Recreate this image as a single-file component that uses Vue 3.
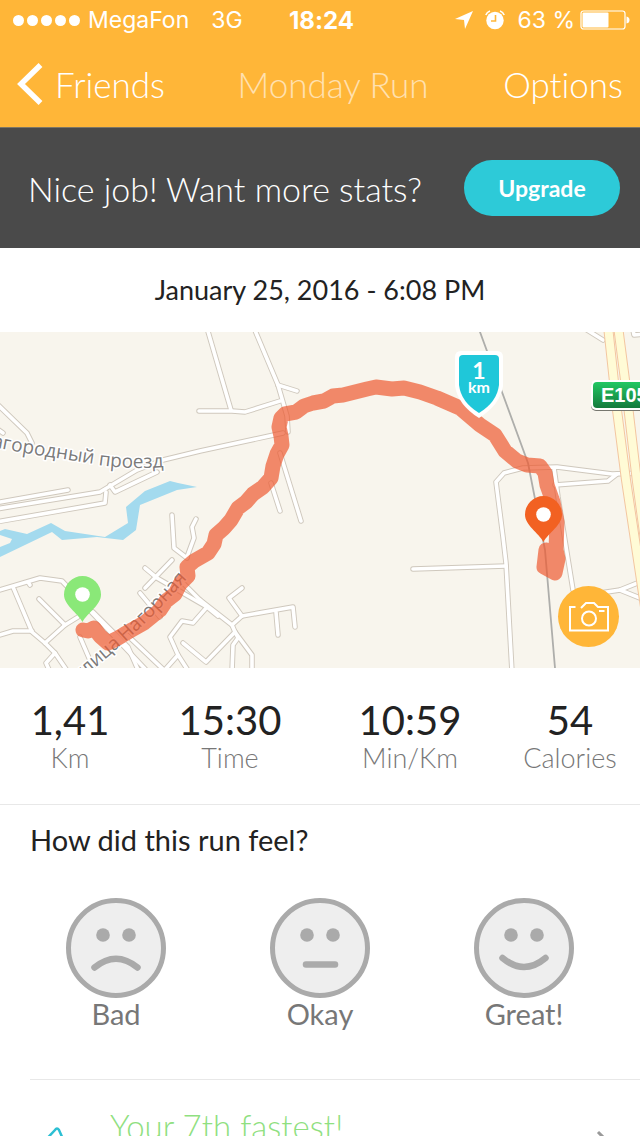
<template>
  <div class="screen">
    <header class="header">
      <div class="status-bar">
        <div class="status-left">
          <span class="signal">
            <i v-for="n in 5" :key="n" class="signal-dot"></i>
          </span>
          <span class="carrier">MegaFon</span>
          <span class="network">3G</span>
        </div>
        <strong class="clock">18:24</strong>
        <div class="status-right">
          <svg class="icon-location" viewBox="0 0 18 18" width="18" height="18">
            <path d="M0 8 L18 0 L10 18 L9 9 Z" fill="#fff" />
          </svg>
          <svg class="icon-alarm" viewBox="0 0 20 20" width="20" height="20">
            <circle cx="10" cy="10.5" r="8.7" fill="#fff" />
            <path d="M0.8 5 A7 7 0 0 1 5 1 M19.2 5 A7 7 0 0 0 15 1" fill="none" stroke="#fff" stroke-width="1.6" />
            <path d="M10.5 5 V11 H6" fill="none" stroke="#ffb638" stroke-width="1.6" />
          </svg>
          <span class="battery-level">63 %</span>
          <svg class="icon-battery" viewBox="0 0 50 20" width="50" height="20">
            <rect x="1" y="1" width="44" height="18" rx="2.5" fill="none" stroke="#fff" stroke-width="1.2" />
            <rect x="2.5" y="2.5" width="26" height="15" rx="1" fill="#fff" />
            <path d="M46.5 6.5 Q49.5 7 49.5 10 Q49.5 13 46.5 13.5 Z" fill="#fff" />
          </svg>
        </div>
      </div>
      <nav class="nav">
        <button type="button" class="nav-button back">
          <svg viewBox="0 0 26 42" width="26" height="42">
            <path d="M23.5 2 L4 21 L23.5 40" fill="none" stroke="#fff" stroke-width="5.5" />
          </svg>
          Friends
        </button>
        <h1 class="nav-title">Monday Run</h1>
        <button type="button" class="nav-button options">Options</button>
      </nav>
    </header>

    <section class="banner">
      <p class="banner-text">Nice job! Want more stats?</p>
      <button type="button" class="upgrade">Upgrade</button>
    </section>

    <p class="date">January 25, 2016 - 6:08 PM</p>

    <section class="map">
      <svg class="map-canvas" viewBox="0 0 640 336" role="img" aria-label="Run route">
        <defs>
          <linearGradient id="badgeFill" x1="0" y1="0" x2="0" y2="1">
            <stop offset="0" stop-color="#22c864" />
            <stop offset="1" stop-color="#147a3c" />
          </linearGradient>
          <path id="northStreet" d="M-8 115 Q4 117 18 120 L88 131 Q125 139 178 134" />
          <path id="southStreet" d="M80 349 L126 309 Q164 275 212 218" />
        </defs>
        <rect width="640" height="336" fill="#f8f5ed" />
        <path :d="water" fill="#a3daee" />
        <g fill="none" stroke-linejoin="round" stroke-linecap="round">
          <path v-for="(d, i) in roads" :key="'edge' + i" :d="d" stroke="#cfc8bd" stroke-width="5.5" />
          <path v-for="(d, i) in roads" :key="'road' + i" :d="d" stroke="#fff" stroke-width="3.6" />
          <path :d="railway" stroke="#aeaeab" stroke-width="1.8" />
          <path v-for="(d, i) in highways" :key="'hedge' + i" :d="d" stroke="#f3c6a0" stroke-width="10" />
          <path v-for="(d, i) in highways" :key="'high' + i" :d="d" stroke="#fffbd6" stroke-width="8" />
        </g>
        <text class="street"><textPath href="#northStreet">агородный проезд</textPath></text>
        <text class="street"><textPath href="#southStreet">улица Нагорная</textPath></text>
        <path :d="track" class="track" />

        <g>
          <rect x="591" y="49" width="64" height="30" rx="5" fill="#77776f" />
          <rect x="591" y="48" width="64" height="30" rx="5" fill="#fff" />
          <rect x="593" y="50" width="62" height="26" rx="4" fill="url(#badgeFill)" />
          <text class="badge-text" x="601" y="70">E105</text>
        </g>

        <path d="M461 19 H497 Q503 19 503 25 V54 Q500 73 479 86 Q458 73 455 54 V25 Q455 19 461 19 Z" fill="#fff" />
        <path d="M463 23 H495 Q499 23 499 27 V53 Q497 70 479 81 Q461 70 459 53 V27 Q459 23 463 23 Z" fill="#1fc7d9" />
        <text class="km-value" x="479" y="47">1</text>
        <text class="km-unit" x="479" y="61">km</text>

        <g v-for="pin in pins" :key="pin.color" :transform="`translate(${pin.x} ${pin.y})`">
          <path d="M0 27.5 C-5 18 -18.5 11 -18.5 0 A18.5 18.5 0 0 1 18.5 0 C18.5 11 5 18 0 27.5 Z" :fill="pin.color" />
          <circle r="7.3" fill="#fff" />
        </g>
      </svg>
      <button type="button" class="camera" aria-label="Add photo">
        <svg viewBox="0 0 40 30" width="40" height="30">
          <g fill="none" stroke="#fff" stroke-width="2">
            <path d="M6.5 5 H1 V28.5 H39 V5 H29 L25 1 H17 L12 6" />
            <circle cx="20" cy="16.5" r="7" />
            <path d="M30 9 H35.5" />
          </g>
        </svg>
      </button>
    </section>

    <dl class="stats">
      <div v-for="stat in stats" :key="stat.label" class="stat">
        <dt class="stat-label">{{ stat.label }}</dt>
        <dd class="stat-value">{{ stat.value }}</dd>
      </div>
    </dl>

    <section class="feeling">
      <h2 class="feeling-title">How did this run feel?</h2>
      <div class="faces">
        <button
          v-for="face in faces"
          :key="face.label"
          type="button"
          class="face"
          :aria-pressed="selected === face.label"
          @click="selected = face.label"
        >
          <svg viewBox="0 0 100 100" width="100" height="100">
            <circle cx="50" cy="50" r="47.5" fill="#eee" stroke="#aaa" stroke-width="5" />
            <circle cx="37" cy="37" r="6.8" fill="#aaa" />
            <circle cx="63" cy="37" r="6.8" fill="#aaa" />
            <path :d="face.mouth" fill="none" stroke="#aaa" stroke-width="6.5" stroke-linecap="round" />
          </svg>
          {{ face.label }}
        </button>
      </div>
    </section>

    <a href="#" class="insight">
      <svg class="insight-icon" viewBox="0 0 50 50" width="50" height="50">
        <path d="M10 29 L25 13 Q27 10 29 13 L40 38 L20 46 Z" fill="none" stroke="#2cbfd3" stroke-width="2.5" />
      </svg>
      <span class="insight-text">Your 7th fastest!</span>
      <svg class="insight-arrow" viewBox="0 0 14 24" width="14" height="24">
        <path d="M2 2 L12 12 L2 22" fill="none" stroke="#999" stroke-width="3" />
      </svg>
    </a>
  </div>
</template>

<script setup>
import { ref } from 'vue'

const selected = ref('')

const stats = [
  { label: 'Km', value: '1,41' },
  { label: 'Time', value: '15:30' },
  { label: 'Min/Km', value: '10:59' },
  { label: 'Calories', value: '54' }
]

const faces = [
  { label: 'Bad', mouth: 'M28.5 69.5 Q50 52 71.5 69.5' },
  { label: 'Okay', mouth: 'M36 66.5 H65' },
  { label: 'Great!', mouth: 'M28.5 60 Q50 78 71.5 60' }
]

const pins = [
  { x: 82.5, y: 262.5, color: '#8ae878' },
  { x: 543.5, y: 182.5, color: '#f26122' }
]

// Map geometry
const water = 'M0 199 L5 197 L27 202 L51 191 L65 199 L105 205 L128 191 L126 175 L145 159 L170 149 L178 151 L197 155 L177 158 L140 173 L136 198 L123 208 L97 205 L62 208 L52 200 L0 225 V215 L10 211 L12 207 L0 203 Z'

const railway = 'M480 0 L528 131 L545 218 L555 336'

const highways = [
  'M608 -6 L617 78 L626 148 L645 275',
  'M618 -6 L625 48 L637 150 L648 230'
]

const track = 'M83 298 L88 299 L94 296 L100 304 L108 311 L118 306 L128 300 L144 291 L160 278 L166 269 L175 262 L180 252 L188 244 L187 235 L194 229 L208 221 L214 212 L216 203 L224 196 L231 188 L238 176 L246 170 L253 162 L263 155 L271 146 L273 134 L277 122 L282 113 L281 104 L279 95 L281 86 L285 82 L296 80 L304 74 L313 71 L324 69 L333 64 L343 63 L367 57 L376 55 L392 57 L404 56 L420 60 L437 66 L460 76 L480 93 L495 103 L505 119 L517 129 L527 133 L540 134 L545 141 L547 153 L553 170 L557 190 L556 218 L558 227 L555 241 L544 235 L546 218 L550 228'

const roads = [
  'M207 -4 L231 78',
  'M199 79 L232 79 L245 80 L280 69',
  'M254 -4 L278 53 L287 84 L288 100',
  'M278 53 L297 59',
  'M0 170 L68 158',
  'M-4 177 L100 160 L137 138 L163 128 L200 119 L283 101',
  'M-4 190 L105 171 L106 160',
  'M110 153 L115 160 L157 140',
  'M280 121 L301 189',
  'M271 151 L280 179',
  'M-4 71 L27 101 L32 111',
  'M-4 96 L3 101',
  'M172 183 L174 216 L187 226',
  'M196 187 L192 195 L194 206 L187 225',
  'M145 236 L157 246 L207 275 L218 284',
  'M172 228 L145 256',
  'M140 261 L160 285',
  'M-4 259 L40 246 L62 249 L80 268 L148 340',
  'M93 280 L128 315 L139 340',
  'M28 250 L30 253',
  'M13 255 L32 300 L45 311 L55 321 L68 340',
  'M-4 304 L13 299 L32 299',
  'M39 267 L65 293 L78 285',
  'M45 311 L65 293',
  'M55 321 L46 331 L50 340',
  'M80 305 L95 340',
  'M127 303 L166 340',
  'M207 275 L193 291 L182 289 L170 305 L178 323 L163 340',
  'M178 323 L189 340',
  'M183 311 L206 330 L235 300',
  'M183 251 L207 275',
  'M200 268 L232 293 L235 300 L252 323 L252 340',
  'M235 300 L238 306 L233 313 L232 340',
  'M232 293 L242 284 L293 275 L295 295',
  'M276 280 L278 303',
  'M242 284 L229 266 L242 256',
  'M587 -2 L603 8',
  'M633 -2 L634 3 L645 2',
  'M413 237 L506 234',
  'M512 340 L506 231 L503 205 L496 150 L504 141 L523 136 L557 135 L612 142 L645 141',
  'M555 153 L608 149 L617 142',
  'M554 136 L558 165 L573 258',
  'M600 261 L620 258 L645 248',
  'M620 258 L645 268'
]
</script>

<style>
body {
  margin: 0;
  background: #fff;
}
</style>

<style scoped>
.screen {
  height: 100vh;
  overflow: hidden;
  background: #fff;
  color: #222;
  font-family: Lato, "Liberation Sans", sans-serif;
  font-variant-ligatures: none;
}

button {
  padding: 0;
  border: none;
  background: none;
  font-family: inherit;
  font-variant-ligatures: none;
  cursor: pointer;
}

svg {
  display: block;
  flex: none;
}

.header {
  background: #ffb638;
  color: #fff;
  border-bottom: 1px solid #7d7665;
}

.status-bar {
  display: grid;
  grid-template-columns: 1fr auto 1fr;
  align-items: center;
  height: 40px;
  padding: 0 10px 0 13px;
  font-family: Inter, "Liberation Sans", sans-serif;
  font-size: 23px;
}

.status-left,
.status-right {
  display: flex;
  align-items: center;
}

.status-right {
  justify-content: flex-end;
}

.signal {
  display: flex;
  gap: 3px;
  margin-right: 8px;
}

.signal-dot {
  width: 11px;
  height: 11px;
  border-radius: 50%;
  background: #fff;
}

.carrier {
  margin-right: 22px;
}

.clock {
  font-size: 24px;
  font-weight: 700;
}

.icon-location,
.icon-alarm {
  margin-right: 12px;
}

.battery-level {
  margin-right: 5px;
}

.nav {
  display: grid;
  grid-template-columns: 1fr auto 1fr;
  align-items: center;
  height: 87px;
  padding: 0 17px;
}

.nav-button,
.nav-title {
  margin: 0;
  color: #fff;
  font-size: 35px;
  font-weight: 300;
  line-height: 40px;
}

.nav-title {
  padding-left: 26px;
  opacity: 0.6;
}

.back {
  display: flex;
  align-items: center;
  gap: 12px;
}

.options {
  justify-self: end;
}

.banner {
  display: flex;
  align-items: center;
  justify-content: space-between;
  height: 120px;
  padding: 0 20px 0 28px;
  background: #4a4a4a;
  color: #fff;
}

.banner-text {
  margin: 0;
  font-size: 34px;
  font-weight: 300;
}

.upgrade {
  width: 156px;
  height: 56px;
  border-radius: 28px;
  background: #2dcad8;
  color: #fff;
  font-size: 23px;
  font-weight: 700;
}

.date {
  margin: 0;
  font-size: 27px;
  line-height: 84px;
  text-align: center;
}

.map {
  position: relative;
}

.map-canvas {
  width: 100%;
  height: auto;
}

.street {
  fill: #7b7b7b;
  stroke: #fff;
  stroke-width: 3px;
  stroke-linejoin: round;
  paint-order: stroke;
  font-family: "Open Sans", "Noto Sans", sans-serif;
  font-size: 19px;
  font-weight: 500;
}

.track {
  fill: none;
  stroke: #ee5a31;
  stroke-width: 15px;
  stroke-linecap: round;
  stroke-linejoin: round;
  stroke-opacity: 0.7;
}

.badge-text {
  fill: #fff;
  font-family: "Liberation Sans", sans-serif;
  font-size: 20px;
  font-weight: 700;
}

.km-value,
.km-unit {
  fill: #fff;
  font-weight: 700;
  text-anchor: middle;
}

.km-value {
  font-size: 23px;
}

.km-unit {
  font-size: 16px;
}

.camera {
  position: absolute;
  right: 21px;
  bottom: 21px;
  display: flex;
  align-items: center;
  justify-content: center;
  width: 61px;
  height: 61px;
  border-radius: 50%;
  background: #ffb638;
}

.stats {
  display: grid;
  grid-template-columns: 7fr 9fr 9fr 7fr;
  margin: 0;
  padding: 28px 0 32px;
  border-bottom: 1px solid #e8e8e8;
}

.stat {
  display: flex;
  flex-direction: column-reverse;
  align-items: center;
}

.stat-value {
  margin: 0;
  font-size: 40px;
  line-height: 48px;
}

.stat-label {
  color: #777;
  font-size: 27px;
  font-weight: 300;
  line-height: 28px;
}

.feeling-title {
  margin: 0;
  padding: 15px 30px 0;
  font-size: 29px;
  font-weight: 400;
  line-height: 40px;
}

.faces {
  display: grid;
  grid-template-columns: repeat(3, 1fr);
  padding: 38px 14px 49px;
}

.face {
  display: flex;
  flex-direction: column;
  align-items: center;
  color: #777;
  font-size: 29px;
  line-height: 32px;
}

.insight {
  display: flex;
  align-items: center;
  height: 124px;
  margin-left: 30px;
  padding-right: 30px;
  border-top: 1px solid #e8e8e8;
  color: #8fe080;
  text-decoration: none;
}

.insight-icon {
  margin-right: 30px;
}

.insight-text {
  flex: 1;
  padding-bottom: 32px;
  font-size: 33px;
  font-weight: 300;
}
</style>
